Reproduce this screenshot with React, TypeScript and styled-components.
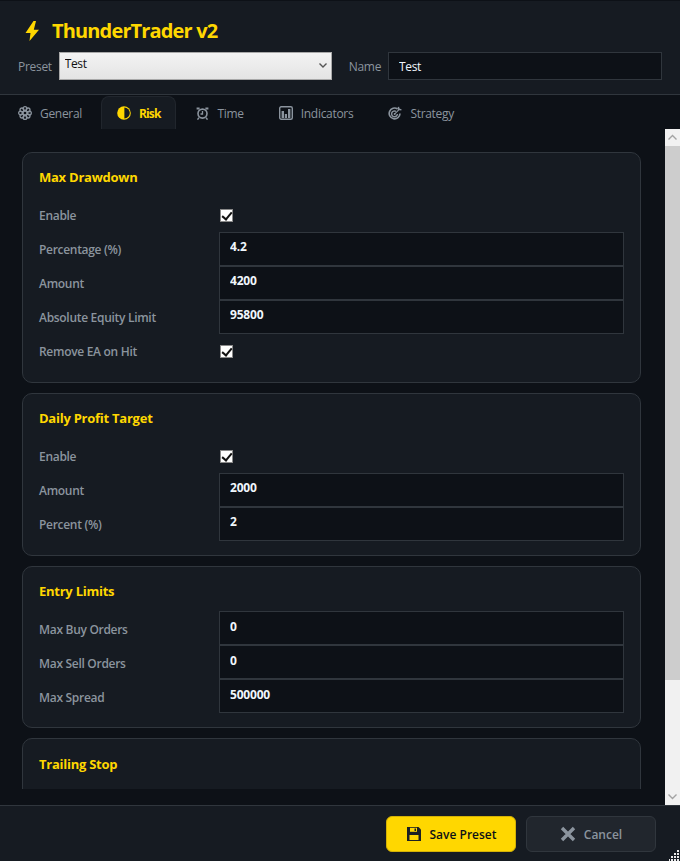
import React, { FC, ReactNode } from 'react';
import styled, { createGlobalStyle } from 'styled-components';

const UI_FONT = `"Open Sans", "Noto Sans", "Liberation Sans", sans-serif`;

const GlobalStyle = createGlobalStyle`
  html, body {
    margin: 0;
    height: 100%;
    overflow: hidden;
    background: #0d1117;
  }
  body {
    font-family: ${UI_FONT};
    font-size: 12px;
  }
  #root {
    height: 100%;
  }
`;

const Shell = styled.div`
  display: flex;
  flex-direction: column;
  height: 100vh;
  background: #0d1117;
`;

const Header = styled.header`
  flex: none;
  box-sizing: border-box;
  height: 95px;
  padding: 0 18px;
  background: #161b22;
  border-top: 1px solid #0d1117;
  border-bottom: 1px solid #30363d;
`;

const TitleRow = styled.div`
  display: flex;
  align-items: center;
  gap: 12px;
  height: 51px;
  padding: 8px 0 0 6px;
  box-sizing: border-box;
`;

const Title = styled.h1`
  margin: 0;
  font-size: 20px;
  font-weight: 700;
  letter-spacing: -0.85px;
  color: #ffd700;
`;

const PresetRow = styled.div`
  display: flex;
  align-items: center;
`;

const FieldLabel = styled.label`
  color: #8b949e;
  font-size: 12px;
  letter-spacing: -0.3px;
  margin-right: 7px;
`;

const SelectWrap = styled.div`
  position: relative;
  width: 273px;
  margin-right: 17px;
`;

const PresetSelect = styled.select`
  display: block;
  width: 100%;
  height: 28px;
  box-sizing: border-box;
  appearance: none;
  padding: 0 20px 6px 5px;
  border: 1px solid #a9a9a9;
  border-radius: 0;
  background: linear-gradient(#f3f3f3, #e4e4e4);
  color: #111;
  font-family: ${UI_FONT};
  font-size: 12px;
  letter-spacing: -0.4px;
`;

const SelectCaret = styled.svg`
  position: absolute;
  top: 9px;
  right: 4px;
  width: 10px;
  height: 8px;
  pointer-events: none;
`;

const NameInput = styled.input`
  width: 274px;
  height: 28px;
  box-sizing: border-box;
  padding: 0 10px;
  border: 1px solid #30363d;
  background: #0d1117;
  color: #f0f6fc;
  font-family: ${UI_FONT};
  font-size: 12px;
  letter-spacing: -0.4px;
  outline: none;
`;

const TabBar = styled.nav`
  flex: none;
  display: flex;
  align-items: flex-end;
  gap: 3px;
  height: 34px;
  padding-left: 2px;
  background: #0d1117;
`;

const Tab = styled.button<{ $active?: boolean }>`
  display: flex;
  align-items: center;
  gap: 8px;
  height: 33px;
  padding: 0 15px;
  box-sizing: border-box;
  border: 1px solid ${p => (p.$active ? '#21262d' : 'transparent')};
  border-bottom: none;
  border-radius: 8px 8px 0 0;
  background: ${p => (p.$active ? '#161b22' : 'transparent')};
  color: ${p => (p.$active ? '#ffd700' : '#8b949e')};
  font-family: ${UI_FONT};
  font-size: 12px;
  font-weight: ${p => (p.$active ? 700 : 400)};
  letter-spacing: ${p => (p.$active ? '-0.9px' : '-0.3px')};
`;

const TabIcon = styled.svg`
  width: 14px;
  height: 14px;
  flex: none;
`;

const Body = styled.div`
  flex: 1;
  min-height: 0;
  display: flex;
`;

const ContentPane = styled.main`
  flex: 1;
  min-width: 0;
  display: flex;
  flex-direction: column;
  padding: 23px 24px 16px 22px;
`;

const CardStack = styled.div`
  flex: 1;
  min-height: 0;
  overflow: hidden;
  display: flex;
  flex-direction: column;
  gap: 10px;
`;

const ScrollTrack = styled.div`
  flex: none;
  width: 15px;
  display: flex;
  flex-direction: column;
  background: #f1f1f1;
`;

const ScrollArrow = styled.svg<{ $end?: boolean }>`
  display: block;
  flex: none;
  width: 15px;
  height: 17px;
  margin-top: ${p => (p.$end ? 'auto' : '0')};
`;

const ScrollThumb = styled.div`
  flex: none;
  height: 534px;
  background: #cdcdcd;
`;

const Card = styled.section<{ $minHeight?: number }>`
  flex: none;
  box-sizing: border-box;
  padding: 0 16px 14px;
  border: 1px solid #30363d;
  border-radius: 10px;
  background: #161b22;
  min-height: ${p => (p.$minHeight ? `${p.$minHeight}px` : 'auto')};
`;

const CardTitle = styled.h3`
  box-sizing: border-box;
  height: 44.8px;
  margin: 0;
  padding-top: 14.4px;
  color: #ffd700;
  font-size: 13px;
  font-weight: 700;
  letter-spacing: -0.25px;
  line-height: 20px;
`;

const Row = styled.div`
  display: grid;
  grid-template-columns: 180px 1fr;
  align-items: center;
  height: 34px;
`;

const RowLabel = styled.span`
  position: relative;
  top: 1px;
  color: #8b949e;
  font-size: 12px;
  font-weight: 600;
  letter-spacing: -0.3px;
`;

const ValueInput = styled.input`
  width: 100%;
  height: 34px;
  box-sizing: border-box;
  padding: 0 10px 4px;
  border: 1px solid #30363d;
  background: #0d1117;
  color: #f0f6fc;
  font-family: ${UI_FONT};
  font-size: 12px;
  font-weight: 700;
  letter-spacing: -0.2px;
  outline: none;
`;

const CheckBox = styled.input`
  position: relative;
  top: 1px;
  appearance: none;
  width: 13px;
  height: 13px;
  margin: 0 0 0 1px;
  border: 1px solid #8a8a8a;
  background: #fff;

  &:checked::after {
    content: '';
    position: absolute;
    left: 3px;
    top: 0;
    width: 4px;
    height: 8px;
    border: solid #111;
    border-width: 0 2px 2px 0;
    transform: rotate(40deg);
  }
`;

const Footer = styled.footer`
  position: relative;
  flex: none;
  display: flex;
  justify-content: flex-end;
  align-items: center;
  gap: 10px;
  box-sizing: border-box;
  height: 56px;
  padding: 1px 24px 0;
  background: #161b22;
  border-top: 1px solid #30363d;
`;

const ActionButton = styled.button<{ $primary?: boolean }>`
  display: flex;
  align-items: center;
  justify-content: center;
  gap: 8px;
  width: 130px;
  height: 36px;
  box-sizing: border-box;
  border: 1px solid ${p => (p.$primary ? '#d4b106' : '#30363d')};
  border-radius: 6px;
  background: ${p => (p.$primary ? '#ffd700' : '#21262d')};
  color: ${p => (p.$primary ? '#0d1117' : '#8b949e')};
  font-family: ${UI_FONT};
  font-size: 12px;
  font-weight: 600;
`;

const ResizeGrip = styled.svg`
  position: absolute;
  right: 0;
  bottom: 0;
  width: 11px;
  height: 11px;
`;

const TabIcons: Record<string, ReactNode> = {
  General: (
    <g fill="none" stroke="#8b949e" strokeWidth="1.3">
      <circle cx="7" cy="7" r="2" />
      <circle cx="7" cy="2.6" r="1.9" />
      <circle cx="7" cy="11.4" r="1.9" />
      <circle cx="2.6" cy="7" r="1.9" />
      <circle cx="11.4" cy="7" r="1.9" />
      <circle cx="3.9" cy="3.9" r="1.9" />
      <circle cx="10.1" cy="3.9" r="1.9" />
      <circle cx="3.9" cy="10.1" r="1.9" />
      <circle cx="10.1" cy="10.1" r="1.9" />
    </g>
  ),
  Risk: (
    <g>
      <circle cx="7" cy="7" r="6.8" fill="#ffd700" />
      <path d="M7.4 1.6a5.4 5.4 0 0 1 0 10.8z" fill="#161b22" />
    </g>
  ),
  Time: (
    <g fill="none" stroke="#8b949e">
      <circle cx="7.5" cy="7.6" r="4.5" strokeWidth="1.6" />
      <path d="M7.5 5v3H5.5" strokeWidth="1.3" />
      <path d="M1.6 2.6h3M10.4 2.6h3" strokeWidth="2" />
      <path d="M4 11.6l-1.5 2M11 11.6l1.5 2" strokeWidth="1.5" />
    </g>
  ),
  Indicators: (
    <g>
      <rect x="0.7" y="0.7" width="12.6" height="12.6" rx="1.5" fill="none" stroke="#8b949e" strokeWidth="1.4" />
      <path d="M2.6 5h2.4v7H2.6zM5.8 8h2.2v4H5.8zM9 3h2.4v9H9z" fill="#8b949e" />
    </g>
  ),
  Strategy: (
    <g fill="none" stroke="#8b949e">
      <path d="M9.6 3A5.4 5.4 0 1 0 12 7.6" strokeWidth="1.6" />
      <path d="M8 5.4A2.9 2.9 0 1 0 9.4 8" strokeWidth="1.5" />
      <circle cx="6.6" cy="8" r="1" fill="#8b949e" stroke="none" />
      <path d="M6.8 7.8L12 2.6" strokeWidth="1.2" />
      <path d="M10.4 0.8l.3 2.6 2.7.3" strokeWidth="1.5" />
    </g>
  ),
};

const TABS = ['General', 'Risk', 'Time', 'Indicators', 'Strategy'];

type Field = { label: string; value?: string };

const TextRow: FC<Field> = ({ label, value }) => (
  <Row>
    <RowLabel>{label}</RowLabel>
    {value === undefined ? (
      <CheckBox type="checkbox" defaultChecked />
    ) : (
      <ValueInput type="text" defaultValue={value} />
    )}
  </Row>
);

const SECTIONS: { title: string; fields: Field[]; minHeight?: number }[] = [
  {
    title: 'Max Drawdown',
    fields: [
      { label: 'Enable' },
      { label: 'Percentage (%)', value: '4.2' },
      { label: 'Amount', value: '4200' },
      { label: 'Absolute Equity Limit', value: '95800' },
      { label: 'Remove EA on Hit' },
    ],
  },
  {
    title: 'Daily Profit Target',
    fields: [
      { label: 'Enable' },
      { label: 'Amount', value: '2000' },
      { label: 'Percent (%)', value: '2' },
    ],
  },
  {
    title: 'Entry Limits',
    fields: [
      { label: 'Max Buy Orders', value: '0' },
      { label: 'Max Sell Orders', value: '0' },
      { label: 'Max Spread', value: '500000' },
    ],
  },
  { title: 'Trailing Stop', fields: [], minHeight: 160 },
];

const App: FC = () => (
  <Shell>
    <GlobalStyle />
    <Header>
      <TitleRow>
        <svg width="16" height="20" viewBox="0 0 16 20">
          <path d="M9.5 0L1.5 12h5L5.5 20 15 8.8H9.8L12 0z" fill="#ffd700" />
        </svg>
        <Title>ThunderTrader v2</Title>
      </TitleRow>
      <PresetRow>
        <FieldLabel>Preset</FieldLabel>
        <SelectWrap>
          <PresetSelect defaultValue="Test">
            <option>Test</option>
          </PresetSelect>
          <SelectCaret viewBox="0 0 10 8">
            <path d="M1.5 2.5L5 6l3.5-3.5" fill="none" stroke="#555" strokeWidth="1.4" />
          </SelectCaret>
        </SelectWrap>
        <FieldLabel>Name</FieldLabel>
        <NameInput type="text" defaultValue="Test" />
      </PresetRow>
    </Header>

    <TabBar>
      {TABS.map(tab => (
        <Tab key={tab} $active={tab === 'Risk'}>
          <TabIcon viewBox="0 0 14 14">{TabIcons[tab]}</TabIcon>
          {tab}
        </Tab>
      ))}
    </TabBar>

    <Body>
      <ContentPane>
        <CardStack>
          {SECTIONS.map(section => (
            <Card key={section.title} $minHeight={section.minHeight}>
              <CardTitle>{section.title}</CardTitle>
              {section.fields.map(field => (
                <TextRow key={field.label} {...field} />
              ))}
            </Card>
          ))}
        </CardStack>
      </ContentPane>
      <ScrollTrack>
        <ScrollArrow viewBox="0 0 15 17">
          <path d="M3.5 10.5l4-4 4 4" fill="none" stroke="#a3a3a3" strokeWidth="1.4" />
        </ScrollArrow>
        <ScrollThumb />
        <ScrollArrow $end viewBox="0 0 15 17">
          <path d="M3.5 6.5l4 4 4-4" fill="none" stroke="#a3a3a3" strokeWidth="1.4" />
        </ScrollArrow>
      </ScrollTrack>
    </Body>

    <Footer>
      <ActionButton $primary>
        <svg width="16" height="16" viewBox="0 0 16 16">
          <path d="M1 1h11.5L15 3.5V15H1z" fill="#1b2024" />
          <rect x="4" y="1.8" width="7" height="4" fill="#ffd700" />
          <rect x="3.5" y="9" width="9" height="5" fill="#ffd700" />
          <rect x="8.5" y="2.5" width="1.5" height="2.5" fill="#1b2024" />
        </svg>
        Save Preset
      </ActionButton>
      <ActionButton>
        <svg width="16" height="16" viewBox="0 0 16 16">
          <path d="M2 2l12 12M14 2L2 14" stroke="#8b949e" strokeWidth="3.4" fill="none" />
        </svg>
        Cancel
      </ActionButton>
      <ResizeGrip viewBox="0 0 11 11">
        <path
          d="M8 0h2v2H8zM8 3h2v2H8zM5 3h2v2H5zM8 6h2v2H8zM5 6h2v2H5zM2 6h2v2H2zM8 9h2v2H8zM5 9h2v2H5zM2 9h2v2H2zM-1 9h2v2h-2z"
          fill="#e8e8e8"
        />
      </ResizeGrip>
    </Footer>
  </Shell>
);

export default App;
